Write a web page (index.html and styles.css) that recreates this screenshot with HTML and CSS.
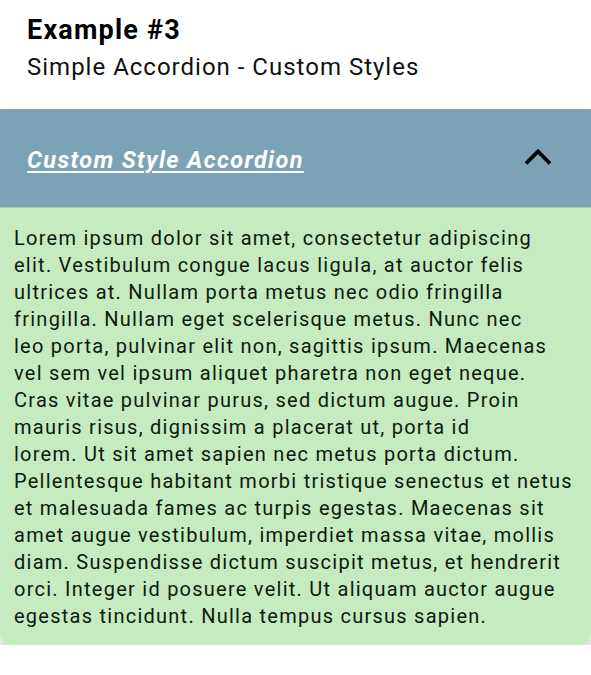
FILE: index.html
```html
<!DOCTYPE html>
<html lang="en">
<head>
<meta charset="utf-8">
<title>Example #3</title>
<link rel="stylesheet" href="styles.css">
</head>
<body>
<header class="intro">
  <h1 class="intro-title">Example #3</h1>
  <p class="intro-sub">Simple Accordion - Custom Styles</p>
</header>
<section class="accordion">
  <div class="acc-header">
    <span class="acc-title">Custom Style Accordion</span>
    <svg class="acc-chevron" width="28" height="18" viewBox="0 0 28 18" aria-hidden="true">
      <path d="M2 15.5 L14 3.5 L26 15.5" fill="none" stroke="#000" stroke-width="3.8" stroke-linecap="butt" stroke-linejoin="miter"/>
    </svg>
  </div>
  <div class="acc-body">
    <p class="acc-text">Lorem ipsum dolor sit amet, consectetur adipiscing<br>
elit. Vestibulum congue lacus ligula, at auctor felis<br>
ultrices at. Nullam porta metus nec odio fringilla<br>
fringilla. Nullam eget scelerisque metus. Nunc nec<br>
leo porta, pulvinar elit non, sagittis ipsum. Maecenas<br>
vel sem vel ipsum aliquet pharetra non eget neque.<br>
Cras vitae pulvinar purus, sed dictum augue. Proin<br>
mauris risus, dignissim a placerat ut, porta id<br>
lorem. Ut sit amet sapien nec metus porta dictum.<br>
Pellentesque habitant morbi tristique senectus et netus<br>
et malesuada fames ac turpis egestas. Maecenas sit<br>
amet augue vestibulum, imperdiet massa vitae, mollis<br>
diam. Suspendisse dictum suscipit metus, et hendrerit<br>
orci. Integer id posuere velit. Ut aliquam auctor augue<br>
egestas tincidunt. Nulla tempus cursus sapien.</p>
  </div>
</section>
</body>
</html>
```

FILE: styles.css
```css
html, body {
  margin: 0;
  padding: 0;
  background: #ffffff;
}
body {
  font-family: Roboto, "Liberation Sans", sans-serif;
  color: #000;
  width: 591px;
}
.intro {
  padding: 14px 27px 0 27px;
  height: 95px;
  box-sizing: border-box;
}
.intro-title {
  margin: 0;
  font-size: 27px;
  font-weight: 700;
  line-height: 32px;
  letter-spacing: 1.2px;
  color: #000;
}
.intro-sub {
  margin: 5px 0 0 0;
  font-size: 24px;
  font-weight: 400;
  line-height: 32px;
  letter-spacing: 1px;
  color: #111;
}
.accordion {
  margin-top: 14px;
  border-radius: 0 0 12px 12px;
  box-shadow: 0 7px 14px rgba(0, 0, 0, 0.22);
  overflow: hidden;
}
.acc-header {
  height: 98px;
  background: #7ba3b5;
  display: flex;
  align-items: center;
  justify-content: space-between;
  padding: 0 39px 0 27px;
  border-bottom: 1px solid #a9c9b8;
}
.acc-title {
  color: #fff;
  font-size: 23.5px;
  font-weight: 700;
  font-style: italic;
  letter-spacing: 1.35px;
  text-decoration: underline;
  text-underline-offset: 3px;
  text-decoration-thickness: 1.5px;
  margin-top: 4px;
}
.acc-chevron {
  display: block;
  margin-top: -2px;
}
.acc-body {
  background: #c6ebc0;
  padding: 17px 14px 15px 14px;
}
.acc-text {
  margin: 0;
  font-size: 20px;
  line-height: 27px;
  letter-spacing: 1.25px;
  white-space: nowrap;
  color: #0d1a0d;
}
```
